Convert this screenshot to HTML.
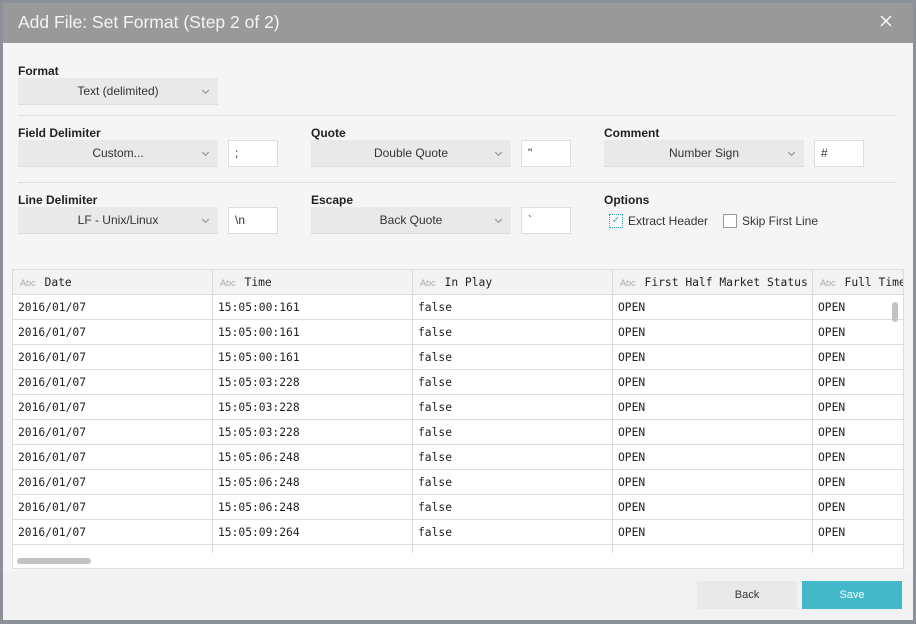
<!DOCTYPE html>
<html><head><style>
*{margin:0;padding:0;box-sizing:border-box}
body{width:916px;height:624px;background:#8b9196;position:relative;overflow:hidden;font-family:"Liberation Sans",sans-serif;font-size:12px;color:#333}
.dlg{position:absolute;left:3px;top:3px;width:910px;height:617px;background:#f5f5f5}
.hdr{position:absolute;left:0;top:0;width:910px;height:40px;background:#999}
.hdr .t{position:absolute;left:15px;top:9px;color:#f4f4f4;font-size:17.5px}
.hdr .x{position:absolute;right:21px;top:12px;width:12px;height:12px}
.lbl{position:absolute;font-weight:bold;font-size:12px;color:#222}
.sel{position:absolute;height:27px;background:#e9e9e9;border-bottom:1px solid #ddd;text-align:center;line-height:27px;font-size:12px;color:#333}
.sel:after{content:"";position:absolute;right:10px;top:10px;width:4px;height:4px;border-right:1px solid #888;border-bottom:1px solid #888;transform:rotate(45deg)}
.inp{position:absolute;height:27px;width:50px;background:#fff;border:1px solid #ddd;line-height:25px;padding-left:6px;font-size:12px}
.hr{position:absolute;left:15px;width:878px;height:1px;background:#ddd}
.cb{position:absolute;width:14px;height:14px;border:1px solid #999;background:#fff}
.tbl{position:absolute;left:9px;top:266px;width:892px;height:300px;background:#fff;border:1px solid #ddd;overflow:hidden}
.row{position:absolute;left:0;height:25px;width:900px;border-bottom:1px solid #ddd;font-family:"DejaVu Sans Mono","Liberation Mono",monospace;font-size:11.3px;color:#222}
.row div{position:absolute;top:0;height:25px;line-height:25px;padding-left:5px;border-right:1px solid #ddd;width:200px;white-space:nowrap;overflow:hidden}
.hrow{background:#f3f3f3}
.hrow div{padding-left:7px}
.hrow i{font-style:normal;font-family:"Liberation Sans",sans-serif;font-size:9px;color:#aaa;margin-right:9px}
.foot{position:absolute;left:0;top:569px;width:910px;height:48px;background:#f2f2f2}
.btn{position:absolute;top:9px;width:100px;height:28px;line-height:28px;text-align:center;font-size:11px}
</style></head><body>
<div class="dlg">
<div class="hdr"><div class="t">Add File: Set Format (Step 2 of 2)</div>
<svg class="x" viewBox="0 0 12 12"><path d="M1 1L11 11M11 1L1 11" stroke="#fff" stroke-width="1.4"/></svg></div>

<div class="lbl" style="left:15px;top:61px">Format</div>
<div class="sel" style="left:15px;top:75px;width:200px">Text (delimited)</div>
<div class="hr" style="top:112px"></div>

<div class="lbl" style="left:15px;top:123px">Field Delimiter</div>
<div class="sel" style="left:15px;top:137px;width:200px">Custom...</div>
<div class="inp" style="left:225px;top:137px">;</div>
<div class="lbl" style="left:308px;top:123px">Quote</div>
<div class="sel" style="left:308px;top:137px;width:200px">Double Quote</div>
<div class="inp" style="left:518px;top:137px">"</div>
<div class="lbl" style="left:601px;top:123px">Comment</div>
<div class="sel" style="left:601px;top:137px;width:200px">Number Sign</div>
<div class="inp" style="left:811px;top:137px">#</div>
<div class="hr" style="top:179px"></div>

<div class="lbl" style="left:15px;top:190px">Line Delimiter</div>
<div class="sel" style="left:15px;top:204px;width:200px">LF - Unix/Linux</div>
<div class="inp" style="left:225px;top:204px">\n</div>
<div class="lbl" style="left:308px;top:190px">Escape</div>
<div class="sel" style="left:308px;top:204px;width:200px">Back Quote</div>
<div class="inp" style="left:518px;top:204px">`</div>
<div class="lbl" style="left:601px;top:190px">Options</div>
<div class="cb" style="left:606px;top:211px;border:1px dotted #2a9fb5;color:#3ab;font-size:10px;line-height:12px;text-align:center">✓</div>
<div style="position:absolute;left:625px;top:211px">Extract Header</div>
<div class="cb" style="left:720px;top:211px"></div>
<div style="position:absolute;left:739px;top:211px">Skip First Line</div>

<div class="tbl">
<div class="row hrow" style="top:0"><div style="left:0"><i>Abc</i>Date</div><div style="left:200px"><i>Abc</i>Time</div><div style="left:400px"><i>Abc</i>In Play</div><div style="left:600px"><i>Abc</i>First Half Market Status</div><div style="left:800px"><i>Abc</i>Full Time</div></div>
<div class="row" style="top:25px"><div style="left:0">2016/01/07</div><div style="left:200px">15:05:00:161</div><div style="left:400px">false</div><div style="left:600px">OPEN</div><div style="left:800px">OPEN</div></div>
<div class="row" style="top:50px"><div style="left:0">2016/01/07</div><div style="left:200px">15:05:00:161</div><div style="left:400px">false</div><div style="left:600px">OPEN</div><div style="left:800px">OPEN</div></div>
<div class="row" style="top:75px"><div style="left:0">2016/01/07</div><div style="left:200px">15:05:00:161</div><div style="left:400px">false</div><div style="left:600px">OPEN</div><div style="left:800px">OPEN</div></div>
<div class="row" style="top:100px"><div style="left:0">2016/01/07</div><div style="left:200px">15:05:03:228</div><div style="left:400px">false</div><div style="left:600px">OPEN</div><div style="left:800px">OPEN</div></div>
<div class="row" style="top:125px"><div style="left:0">2016/01/07</div><div style="left:200px">15:05:03:228</div><div style="left:400px">false</div><div style="left:600px">OPEN</div><div style="left:800px">OPEN</div></div>
<div class="row" style="top:150px"><div style="left:0">2016/01/07</div><div style="left:200px">15:05:03:228</div><div style="left:400px">false</div><div style="left:600px">OPEN</div><div style="left:800px">OPEN</div></div>
<div class="row" style="top:175px"><div style="left:0">2016/01/07</div><div style="left:200px">15:05:06:248</div><div style="left:400px">false</div><div style="left:600px">OPEN</div><div style="left:800px">OPEN</div></div>
<div class="row" style="top:200px"><div style="left:0">2016/01/07</div><div style="left:200px">15:05:06:248</div><div style="left:400px">false</div><div style="left:600px">OPEN</div><div style="left:800px">OPEN</div></div>
<div class="row" style="top:225px"><div style="left:0">2016/01/07</div><div style="left:200px">15:05:06:248</div><div style="left:400px">false</div><div style="left:600px">OPEN</div><div style="left:800px">OPEN</div></div>
<div class="row" style="top:250px"><div style="left:0">2016/01/07</div><div style="left:200px">15:05:09:264</div><div style="left:400px">false</div><div style="left:600px">OPEN</div><div style="left:800px">OPEN</div></div>
<div class="row" style="top:275px;border:none"><div style="left:0"></div><div style="left:200px"></div><div style="left:400px"></div><div style="left:600px"></div><div style="left:800px"></div></div>
<div style="position:absolute;left:0;top:283px;width:892px;height:20px;background:#fff"></div>
<div style="position:absolute;left:4px;top:288px;width:74px;height:6px;border-radius:3px;background:#c2c2c2"></div>
<div style="position:absolute;left:879px;top:32px;width:6px;height:20px;border-radius:3px;background:#c2c2c2"></div>
</div>

<div class="foot">
<div class="btn" style="left:694px;background:#e9e9e9;color:#333">Back</div>
<div class="btn" style="left:799px;background:#42b8c9;color:#fff">Save</div>
</div>
</div>
</body></html>
